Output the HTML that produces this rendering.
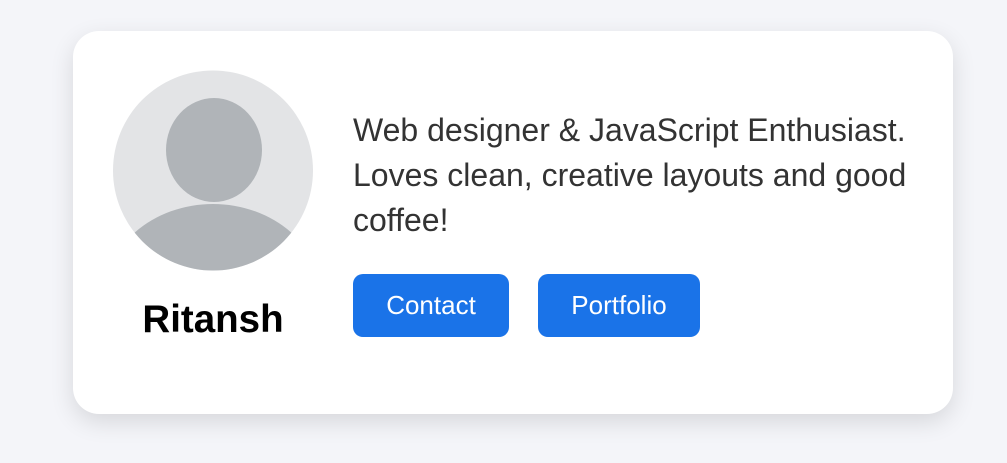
<!DOCTYPE html>
<html><head><style>
html,body{margin:0;padding:0;width:1007px;height:463px;background:#f4f5f9;overflow:hidden;font-family:"Liberation Sans",Arial,sans-serif;}
.card{position:absolute;left:73px;top:31px;width:880px;height:383px;background:#fff;border-radius:26px;box-shadow:0 8px 24px rgba(0,0,0,0.12);}
svg{position:absolute;left:113px;top:70px;}
.name{position:absolute;left:113px;width:200px;top:298px;text-align:center;font-weight:bold;font-size:38.5px;color:#000;}
.bio{position:absolute;left:353px;top:108px;width:595px;font-size:32px;line-height:45px;color:#333;}
.btn{position:absolute;top:274px;height:63px;background:#1a73e8;color:#fff;border-radius:10px;font-size:26px;line-height:63px;text-align:center;}
</style></head><body>
<div class="card"></div>
<svg width="201" height="201" viewBox="113 70 201 201">
<defs><clipPath id="c"><circle cx="213" cy="170.5" r="100"/></clipPath></defs>
<circle cx="213" cy="170.5" r="100" fill="#e3e4e6"/>
<g clip-path="url(#c)" fill="#b0b4b8">
<ellipse cx="214" cy="150" rx="48" ry="52"/>
<ellipse cx="213" cy="300" rx="110" ry="96"/>
</g>
</svg>
<div class="name">Ritansh</div>
<div class="bio">Web designer &amp; JavaScript Enthusiast. Loves clean, creative layouts and good coffee!</div>
<div class="btn" style="left:353px;width:156px;">Contact</div>
<div class="btn" style="left:538px;width:162px;">Portfolio</div>
</body></html>
